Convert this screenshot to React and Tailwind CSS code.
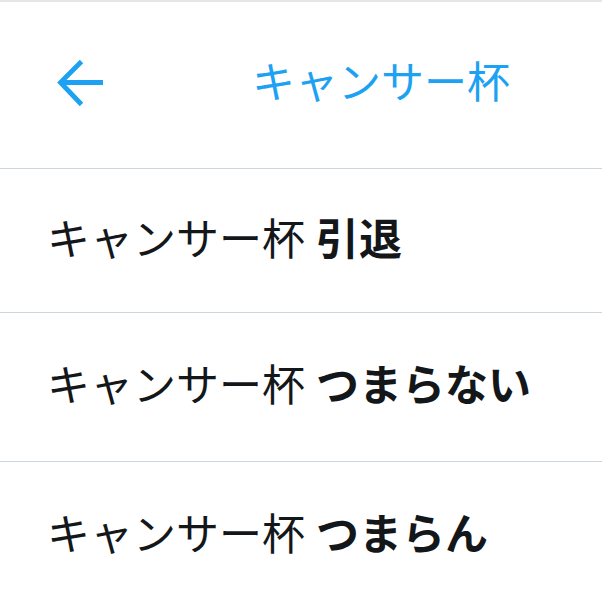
import { useState } from 'react';

const rows = [
  { id: 1, prefix: 'キャンサー杯', suffix: '引退', h: 'h-[144px]' },
  { id: 2, prefix: 'キャンサー杯', suffix: 'つまらない', h: 'h-[149px]' },
  { id: 3, prefix: 'キャンサー杯', suffix: 'つまらん', h: 'h-[148px]' },
];

function BackArrow() {
  return (
    <svg width="48" height="48" viewBox="0 0 48 48" fill="none">
      <path
        d="M46 23.5H4M24.5 2.5L3.5 23.5L24.5 45.5"
        stroke="#1da1f2"
        strokeWidth="4.8"
      />
    </svg>
  );
}

export default function App() {
  const [query] = useState('キャンサー杯');

  return (
    <div
      className="w-[602px] h-[602px] overflow-hidden bg-white"
      style={{ fontFamily: '"Noto Sans CJK JP", "Noto Sans", sans-serif' }}
    >
      <header className="h-[169px] border-t-2 border-[#e6e6e6] border-b border-b-[#ccd6dd] flex items-center pb-[5px]">
        <div className="w-[160px] pl-[57px] flex items-center">
          <BackArrow />
        </div>
        <h1 className="flex-1 text-center text-[43px] leading-none text-[#1da1f2] pb-[7px]">{query}</h1>
      </header>

      <ul>
        {rows.map((r) => (
          <li
            key={r.id}
            className={`${r.h} flex items-center pl-[47px] pb-[9px] border-b border-[#ccd6dd] text-[43px] leading-none text-[#14171a]`}
          >
            <span>{r.prefix}</span>
            <span className="ml-[11px] font-bold">{r.suffix}</span>
          </li>
        ))}
      </ul>
    </div>
  );
}
